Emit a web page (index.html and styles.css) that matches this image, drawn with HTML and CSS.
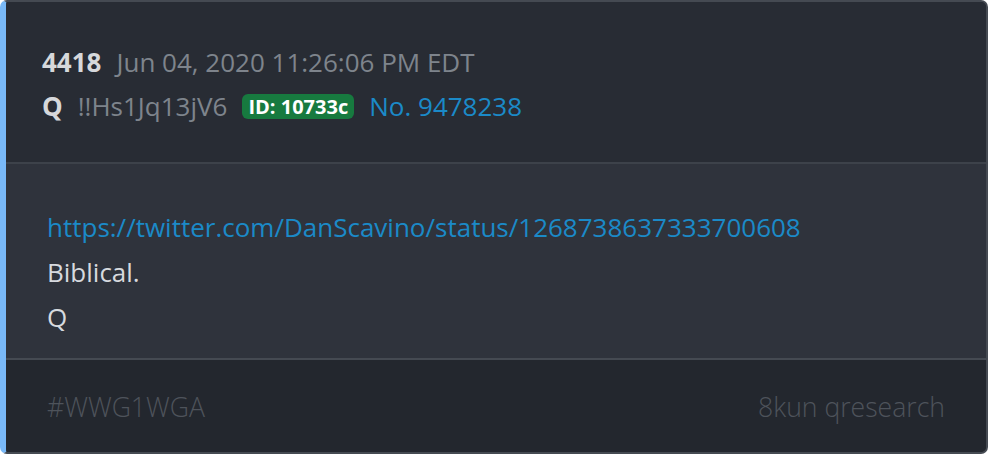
FILE: index.html
```html
<!DOCTYPE html>
<html>
<head>
<meta charset="utf-8">
<link rel="stylesheet" href="styles.css">
</head>
<body>
<article class="card">
  <header class="card-head">
    <div class="row">
      <span class="num">4418</span>
      <span class="meta">Jun 04, 2020 11:26:06 PM EDT</span>
    </div>
    <div class="row">
      <span class="author">Q</span>
      <span class="meta">!!Hs1Jq13jV6</span>
      <span class="badge">ID: 10733c</span>
      <a class="link">No. 9478238</a>
    </div>
  </header>
  <section class="card-body">
    <p class="line"><a class="link">https://twitter.com/DanScavino/status/1268738637333700608</a></p>
    <p class="line">Biblical.</p>
    <p class="line">Q</p>
  </section>
  <footer class="card-foot">
    <span>#WWG1WGA</span>
    <span>8kun qresearch</span>
  </footer>
</article>
</body>
</html>
```
FILE: styles.css
```css
html, body {
  margin: 0;
  padding: 0;
  background: #ffffff;
}
body {
  font-family: "Open Sans", "Noto Sans", sans-serif;
  font-size: 26px;
}
.card {
  width: 988px;
  height: 454px;
  box-sizing: border-box;
  display: flex;
  flex-direction: column;
  border: 2px solid #454a52;
  border-left: 6px solid #79b9f8;
  border-radius: 7px;
  overflow: hidden;
  background: #282c34;
}
.card-head {
  height: 162px;
  flex: none;
  box-sizing: border-box;
  padding: 42px 0 0 36px;
  background: #282c34;
  border-bottom: 2px solid #3d424a;
  display: flex;
  flex-direction: column;
  gap: 8px;
}
.row {
  display: flex;
  align-items: center;
  gap: 15px;
  line-height: 36px;
}
.num, .author {
  font-weight: 700;
  color: #d6d8db;
}
.meta {
  color: #7e848c;
}
.link {
  color: #1b8ac8;
  text-decoration: none;
}
.badge {
  background: #177a3f;
  color: #ffffff;
  font-weight: 700;
  font-size: 20px;
  line-height: 25px;
  padding: 0 6px;
  border-radius: 6px;
}
.card-body {
  height: 196px;
  flex: none;
  box-sizing: border-box;
  padding: 41px 0 0 41px;
  background: #2f333c;
  border-bottom: 2px solid #454a52;
}
.line {
  margin: 0;
  line-height: 45px;
  color: #d7dadf;
}
.card-foot {
  flex: 1;
  display: flex;
  justify-content: space-between;
  align-items: center;
  padding: 2px 41px 0 41px;
  background: #23272e;
  color: #4e535b;
  font-weight: 300;
  font-size: 26.6px;
}
```
